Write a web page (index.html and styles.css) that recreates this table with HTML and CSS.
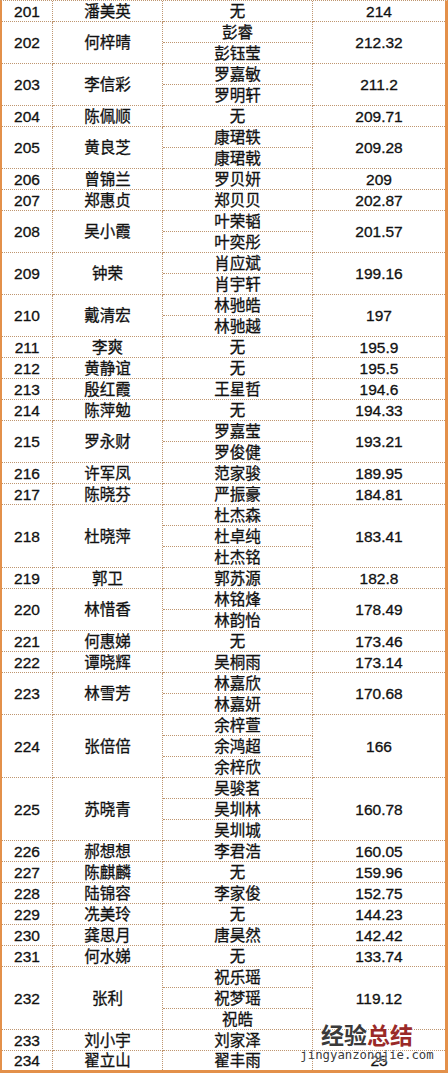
FILE: index.html
```html
<!DOCTYPE html>
<html lang="zh-CN">
<head>
<meta charset="utf-8">
<title>名单</title>
<link rel="stylesheet" href="styles.css">
</head>
<body>
<div class="page">
<table class="list">
<colgroup><col class="c1"><col class="c2"><col class="c3"><col class="c4"></colgroup>
<tbody>
<tr><td>201</td><td>潘美英</td><td>无</td><td class="s">214</td></tr>
<tr><td rowspan="2">202</td><td rowspan="2">何梓晴</td><td>彭睿</td><td class="s" rowspan="2">212.32</td></tr>
<tr><td>彭钰莹</td></tr>
<tr><td rowspan="2">203</td><td rowspan="2">李信彩</td><td>罗嘉敏</td><td class="s" rowspan="2">211.2</td></tr>
<tr><td>罗明轩</td></tr>
<tr><td>204</td><td>陈佩顺</td><td>无</td><td class="s">209.71</td></tr>
<tr><td rowspan="2">205</td><td rowspan="2">黄良芝</td><td>康珺轶</td><td class="s" rowspan="2">209.28</td></tr>
<tr><td>康珺戟</td></tr>
<tr><td>206</td><td>曾锦兰</td><td>罗贝妍</td><td class="s">209</td></tr>
<tr><td>207</td><td>郑惠贞</td><td>郑贝贝</td><td class="s">202.87</td></tr>
<tr><td rowspan="2">208</td><td rowspan="2">吴小霞</td><td>叶荣韬</td><td class="s" rowspan="2">201.57</td></tr>
<tr><td>叶奕彤</td></tr>
<tr><td rowspan="2">209</td><td rowspan="2">钟荣</td><td>肖应斌</td><td class="s" rowspan="2">199.16</td></tr>
<tr><td>肖宇轩</td></tr>
<tr><td rowspan="2">210</td><td rowspan="2">戴清宏</td><td>林驰皓</td><td class="s" rowspan="2">197</td></tr>
<tr><td>林驰越</td></tr>
<tr><td>211</td><td>李爽</td><td>无</td><td class="s">195.9</td></tr>
<tr><td>212</td><td>黄静谊</td><td>无</td><td class="s">195.5</td></tr>
<tr><td>213</td><td>殷红霞</td><td>王星哲</td><td class="s">194.6</td></tr>
<tr><td>214</td><td>陈萍勉</td><td>无</td><td class="s">194.33</td></tr>
<tr><td rowspan="2">215</td><td rowspan="2">罗永财</td><td>罗嘉莹</td><td class="s" rowspan="2">193.21</td></tr>
<tr><td>罗俊健</td></tr>
<tr><td>216</td><td>许军凤</td><td>范家骏</td><td class="s">189.95</td></tr>
<tr><td>217</td><td>陈晓芬</td><td>严振豪</td><td class="s">184.81</td></tr>
<tr><td rowspan="3">218</td><td rowspan="3">杜晓萍</td><td>杜杰森</td><td class="s" rowspan="3">183.41</td></tr>
<tr><td>杜卓纯</td></tr>
<tr><td>杜杰铭</td></tr>
<tr><td>219</td><td>郭卫</td><td>郭苏源</td><td class="s">182.8</td></tr>
<tr><td rowspan="2">220</td><td rowspan="2">林惜香</td><td>林铭烽</td><td class="s" rowspan="2">178.49</td></tr>
<tr><td>林韵怡</td></tr>
<tr><td>221</td><td>何惠娣</td><td>无</td><td class="s">173.46</td></tr>
<tr><td>222</td><td>谭晓辉</td><td>吴桐雨</td><td class="s">173.14</td></tr>
<tr><td rowspan="2">223</td><td rowspan="2">林雪芳</td><td>林嘉欣</td><td class="s" rowspan="2">170.68</td></tr>
<tr><td>林嘉妍</td></tr>
<tr><td rowspan="3">224</td><td rowspan="3">张倍倍</td><td>余梓萱</td><td class="s" rowspan="3">166</td></tr>
<tr><td>余鸿超</td></tr>
<tr><td>余梓欣</td></tr>
<tr><td rowspan="3">225</td><td rowspan="3">苏晓青</td><td>吴骏茗</td><td class="s" rowspan="3">160.78</td></tr>
<tr><td>吴圳林</td></tr>
<tr><td>吴圳城</td></tr>
<tr><td>226</td><td>郝想想</td><td>李君浩</td><td class="s">160.05</td></tr>
<tr><td>227</td><td>陈麒麟</td><td>无</td><td class="s">159.96</td></tr>
<tr><td>228</td><td>陆锦容</td><td>李家俊</td><td class="s">152.75</td></tr>
<tr><td>229</td><td>冼美玲</td><td>无</td><td class="s">144.23</td></tr>
<tr><td>230</td><td>龚思月</td><td>唐昊然</td><td class="s">142.42</td></tr>
<tr><td>231</td><td>何水娣</td><td>无</td><td class="s">133.74</td></tr>
<tr><td rowspan="3">232</td><td rowspan="3">张利</td><td>祝乐瑶</td><td class="s" rowspan="3">119.12</td></tr>
<tr><td>祝梦瑶</td></tr>
<tr><td>祝皓</td></tr>
<tr><td>233</td><td>刘小宇</td><td>刘家泽</td><td class="s"></td></tr>
<tr class="last"><td>234</td><td>翟立山</td><td>翟丰雨</td><td class="s">25</td></tr>
</tbody>
</table>
<div class="mark">
  <div class="mark-title"><span class="mark-dark">经验</span><span class="mark-red">总结</span></div>
  <div class="mark-url">jingyanzongjie.com</div>
</div>
</div>
</body>
</html>
```

FILE: styles.css
```css
html, body {
  margin: 0;
  padding: 0;
  background: #ffffff;
}

.page {
  position: relative;
  width: 448px;
  height: 1073px;
  overflow: hidden;
}

.list {
  width: 448px;
  table-layout: fixed;
  border-collapse: separate;
  border-spacing: 0;
  border-top: 1px dotted #bf9670;
  border-left: 2px solid #e3904a;
  border-right: 3px solid #e3904a;
  border-bottom: 3px solid #e3904a;
  font-family: "Liberation Sans", "Noto Sans CJK SC", sans-serif;
  font-size: 15.5px;
  color: #111111;
}

.c1 { width: 51px; }
.c2 { width: 110px; }
.c3 { width: 150px; }
.c4 { width: 132px; }

.list tr {
  height: 21px;
}

.list td {
  padding: 1px 0 0 0;
  line-height: 18px;
  text-align: center;
  vertical-align: middle;
  border-right: 1px dotted #bf9670;
  border-bottom: 1px dotted #bf9670;
  white-space: nowrap;
  overflow: hidden;
  -webkit-text-stroke: 0.3px #111111;
}

.list td.s {
  border-right: none;
}

.list tr.last {
  height: 18px;
}

.list tr.last td {
  border-bottom: none;
}

.mark {
  position: absolute;
  left: 300px;
  top: 1020px;
  width: 134px;
  text-align: center;
  pointer-events: none;
}

.mark-title {
  font-family: "Noto Sans CJK SC", sans-serif;
  font-weight: 700;
  font-size: 23px;
  line-height: 28px;
  letter-spacing: 0;
  text-shadow: 0 0 2px #ffffff, 0 0 2px #ffffff, 0 0 3px #ffffff;
}

.mark-dark {
  color: #3a3a3a;
}

.mark-red {
  color: #9a2a28;
}

.mark-url {
  font-family: "DejaVu Sans Mono", monospace;
  font-size: 12.3px;
  line-height: 14px;
  color: #3a3a3a;
  text-shadow: 0 0 2px #ffffff, 0 0 2px #ffffff;
}
```
